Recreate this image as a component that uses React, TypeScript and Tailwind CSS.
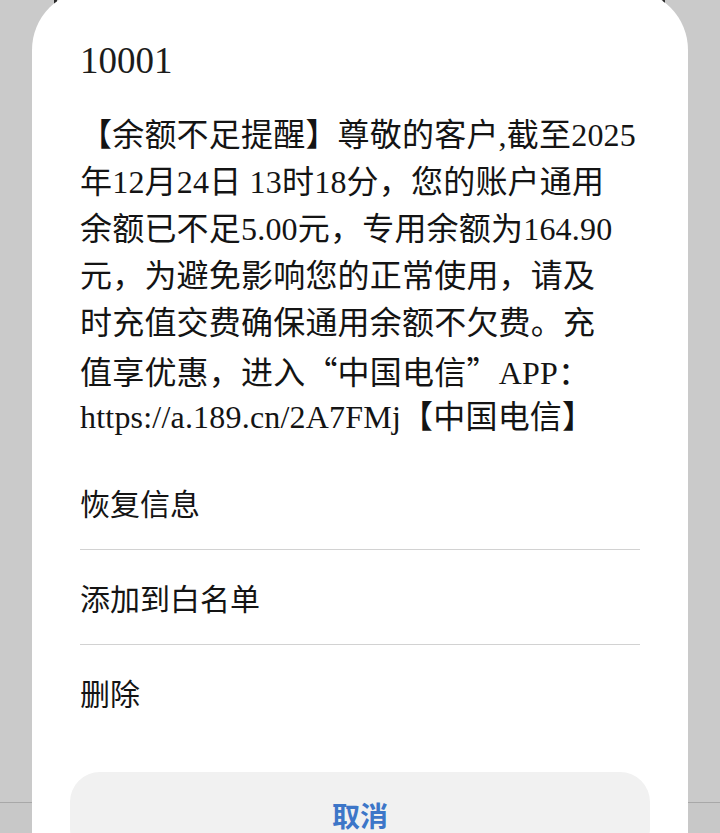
import { Search } from 'lucide-react';

const cjk = { fontFamily: '"Noto Sans CJK SC", sans-serif' };

const bodyLines = [
    '【余额不足提醒】尊敬的客户,截至2025',
    '年12月24日 13时18分，您的账户通用',
    '余额已不足5.00元，专用余额为164.90',
    '元，为避免影响您的正常使用，请及',
    '时充值交费确保通用余额不欠费。充',
    null,
    'https://a.189.cn/2A7FMj【中国电信】',
];

const actions = ['恢复信息', '添加到白名单', '删除'];

export default function App() {
    return (
        <div
            className="relative w-[720px] h-[833px] overflow-hidden flex flex-col bg-[linear-gradient(to_bottom,#cacaca_802px,#a8a8a8_802px,#a8a8a8_803px,#c8c8c8_803px)]"
            style={{ fontFamily: '"Liberation Serif", "Noto Sans CJK SC", serif' }}
        >
            {/* dimmed page behind the sheet */}
            <div className="absolute left-[54px] -top-[6px] w-[3px] h-[12px] bg-[#2a2a2a]" />
            <Search className="absolute left-[640px] -top-[12px] w-[30px] h-[30px] text-[#2a2a2a]" strokeWidth={2} />

            <div className="relative mx-[32px] -mt-[10px] flex-1 bg-white rounded-t-[60px] flex flex-col pt-[49px]">
                <div className="px-[48px]">
                    <div className="h-[44px] text-[37px] leading-[44px] text-[#1c1c1c]">10001</div>

                    <div className="mt-[29px] text-[32px] leading-[47px] tracking-[0.2px] text-[#141414] whitespace-nowrap">
                        {bodyLines.map((line, i) =>
                            line === null ? (
                                <div key={i} className="h-[47px] overflow-hidden">
                                    值享优惠，进入<span style={cjk}>“</span>中国电信<span style={cjk}>”</span>APP：
                                </div>
                            ) : (
                                <div key={i} className="h-[47px]">{line}</div>
                            )
                        )}
                    </div>

                    <div className="mt-[14px] flex flex-col">
                        {actions.map((label, i) => (
                            <div
                                key={label}
                                className={
                                    i < actions.length - 1
                                        ? 'h-[95px] flex items-center border-b border-[#d2d2d2] text-[30px] text-[#141414]'
                                        : 'h-[95px] flex items-center text-[30px] text-[#141414]'
                                }
                                style={cjk}
                            >
                                {label}
                            </div>
                        ))}
                    </div>
                </div>

                <div
                    className="mt-[32px] mx-[38px] h-[86px] shrink-0 rounded-[30px] bg-[#f1f1f1] flex items-center justify-center text-[28px] leading-none font-bold text-[#3d76c8]"
                    style={cjk}
                >
                    取消
                </div>
            </div>
        </div>
    );
}
